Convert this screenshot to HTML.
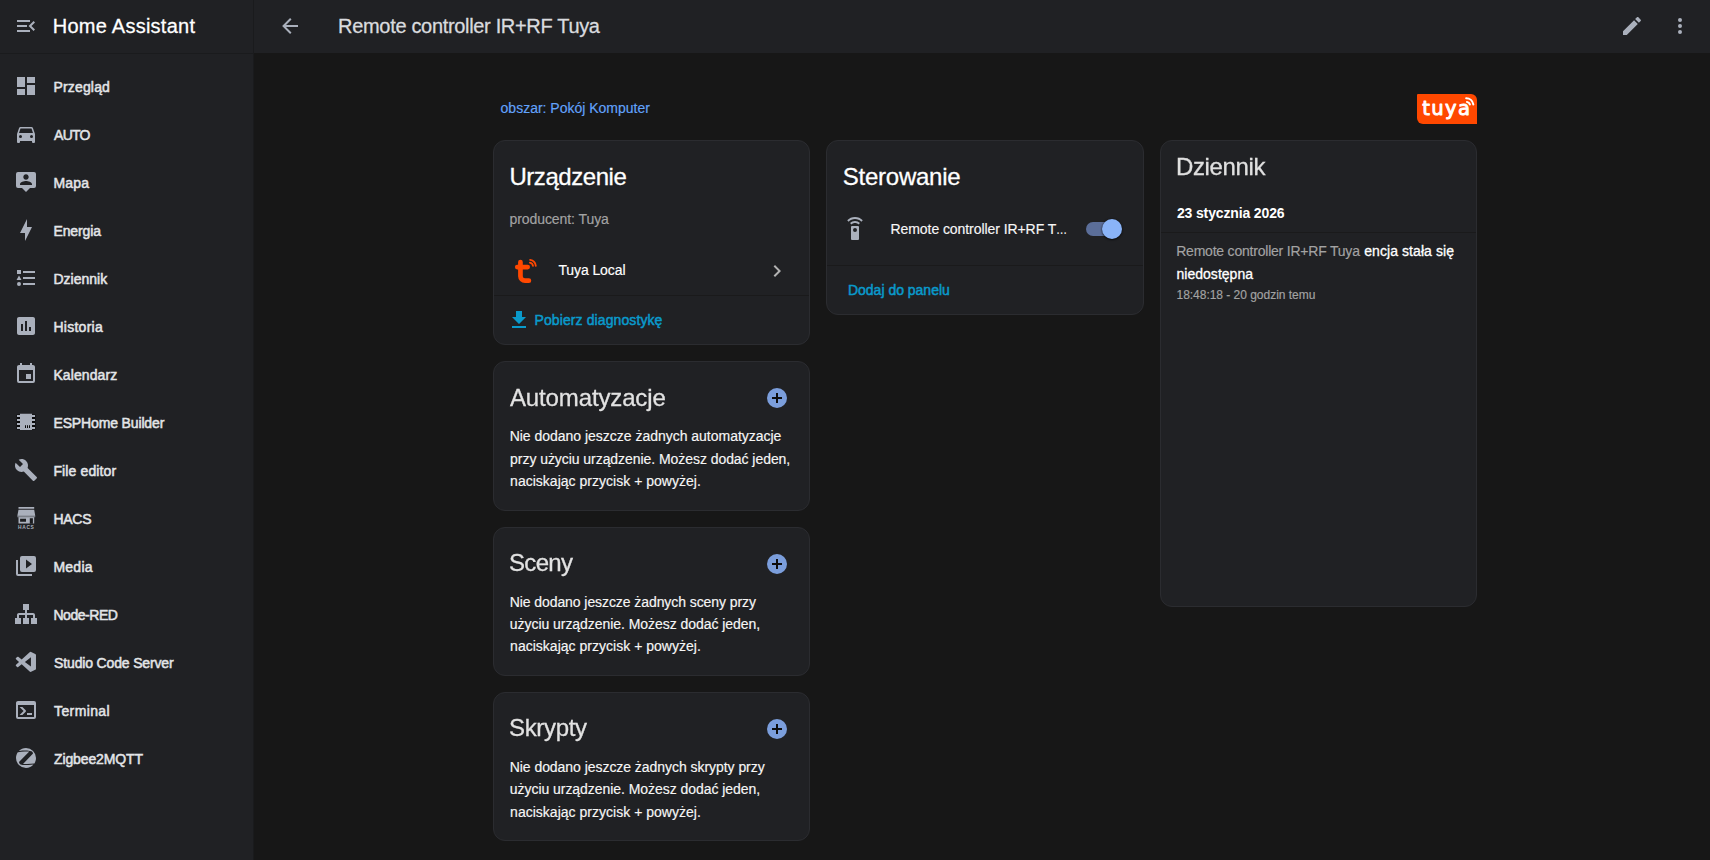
<!DOCTYPE html>
<html lang="pl"><head><meta charset="utf-8"><title>Remote controller IR+RF Tuya – Home Assistant</title>
<style>
html,body{margin:0;padding:0}
body{width:1710px;height:860px;overflow:hidden;background:#171717;position:relative;font-family:"Liberation Sans", sans-serif}
.t{position:absolute;white-space:nowrap;margin:0}
.i{position:absolute;display:block;overflow:visible}
.b{position:absolute;box-sizing:border-box}
.card{position:absolute;box-sizing:border-box;background:#202124;border:1px solid #2b2c30;border-radius:12px}
.hr{position:absolute;height:1px;background:#1a1a1b}
</style></head>
<body>
<div class="b" style="left:0;top:0;width:254px;height:860px;background:#202124;border-right:1px solid #1a1b1d"></div>
<div class="b" style="left:0;top:53px;width:253px;height:1px;background:#1a1b1d"></div>
<div class="b" style="left:254px;top:0;width:1456px;height:53px;background:#202124"></div>
<div class="card" style="left:493px;top:140px;width:317px;height:205px"></div>
<div class="card" style="left:493px;top:361px;width:317px;height:150px"></div>
<div class="card" style="left:493px;top:527px;width:317px;height:149px"></div>
<div class="card" style="left:493px;top:692px;width:317px;height:149px"></div>
<div class="card" style="left:826px;top:140px;width:318px;height:175px"></div>
<div class="card" style="left:1160px;top:140px;width:317px;height:467px"></div>
<div class="hr" style="left:494px;top:295px;width:315px"></div>
<div class="hr" style="left:827px;top:265px;width:316px"></div>
<div class="hr" style="left:1161px;top:232px;width:315px"></div>
<div class="b" style="left:1086px;top:222px;width:32px;height:14px;border-radius:7px;background:#5b6e99"></div>
<div class="b" style="left:1102px;top:219px;width:20px;height:20px;border-radius:10px;background:#8ab4f8;box-shadow:0 1px 2px rgba(0,0,0,.6),0 0 2px rgba(0,0,0,.5)"></div>
<svg class="i" style="left:1417px;top:94px" width="60" height="30" viewBox="0 0 60 30"><path d="M1,0H54A6,6 0 0,1 60,6V30H6A6,6 0 0,1 0,24V1A1,1 0 0,1 1,0Z" fill="#ff4800"/><text x="5.3" y="21.3" font-family="DejaVu Sans, sans-serif" font-size="19.6" fill="#fff" stroke="#fff" stroke-width="0.9" stroke-linejoin="round" letter-spacing="1.3">tuya</text><g fill="none" stroke="#fff" stroke-width="2.1" stroke-linecap="round"><path d="M49.2,4.3A7.2,7.2 0 0,1 56.3,10.4"/><path d="M50,8A3.6,3.6 0 0,1 52.9,10.4"/></g></svg>
<svg class="i" style="left:514px;top:257px" width="24" height="28" viewBox="0 0 24 28" fill="none" stroke="#ff4800" stroke-linecap="round"><path d="M6.45,5.1V19.2A4.5,4.5 0 0,0 10.95,23.7H14.9" stroke-width="4.7"/><path d="M3.2,10.1H13.7" stroke-width="4.6"/><path d="M16.1,2.9A6.7,6.7 0 0,1 21.8,8.9" stroke-width="1.8"/><path d="M15.9,5.7A4,4 0 0,1 19.0,8.9" stroke-width="1.8"/></svg>
<svg class="i" style="left:14.00px;top:14.00px" width="24" height="24" viewBox="0 0 24 24" fill="#aab0bc"><path d="M21,15.61L19.59,17L14.58,12L19.59,7L21,8.39L17.44,12L21,15.61M3,6H16V8H3V6M3,13V11H13V13H3M3,18V16H16V18H3Z"/></svg>
<svg class="i" style="left:14.00px;top:74.20px" width="24" height="24" viewBox="0 0 24 24" fill="#aab0bc"><path d="M13,3V9H21V3M13,21H21V11H13M3,21H11V15H3M3,13H11V3H3V13Z"/></svg>
<svg class="i" style="left:14.00px;top:122.20px" width="24" height="24" viewBox="0 0 24 24" fill="#aab0bc"><path d="M5,11L6.5,6.5H17.5L19,11M17.5,16A1.5,1.5 0 0,1 16,14.5A1.5,1.5 0 0,1 17.5,13A1.5,1.5 0 0,1 19,14.5A1.5,1.5 0 0,1 17.5,16M6.5,16A1.5,1.5 0 0,1 5,14.5A1.5,1.5 0 0,1 6.5,13A1.5,1.5 0 0,1 8,14.5A1.5,1.5 0 0,1 6.5,16M18.92,6C18.72,5.42 18.16,5 17.5,5H6.5C5.84,5 5.28,5.42 5.08,6L3,12V20A1,1 0 0,0 4,21H5A1,1 0 0,0 6,20V19H18V20A1,1 0 0,0 19,21H20A1,1 0 0,0 21,20V12L18.92,6Z"/></svg>
<svg class="i" style="left:14.00px;top:170.20px" width="24" height="24" viewBox="0 0 24 24" fill="#aab0bc"><path d="M20,2H4A2,2 0 0,0 2,4V16A2,2 0 0,0 4,18H8L12,22L16,18H20A2,2 0 0,0 22,16V4A2,2 0 0,0 20,2M12,4.3C13.5,4.3 14.7,5.5 14.7,7C14.7,8.5 13.5,9.7 12,9.7C10.5,9.7 9.3,8.5 9.3,7C9.3,5.5 10.5,4.3 12,4.3M18,15H6V14.1C6,12.1 10,11 12,11C14,11 18,12.1 18,14.1V15Z"/></svg>
<svg class="i" style="left:14.00px;top:218.20px" width="24" height="24" viewBox="0 0 24 24" fill="#aab0bc"><path d="M11,15H6L13,1V9H18L11,23V15Z"/></svg>
<svg class="i" style="left:14.00px;top:266.20px" width="24" height="24" viewBox="0 0 24 24" fill="#aab0bc"><path d="M5,9.5L7.5,14H2.5L5,9.5M3,4H7V8H3V4M5,20A2,2 0 0,0 7,18A2,2 0 0,0 5,16A2,2 0 0,0 3,18A2,2 0 0,0 5,20M9,5V7H21V5H9M9,19H21V17H9V19M9,13H21V11H9V13Z"/></svg>
<svg class="i" style="left:14.00px;top:314.20px" width="24" height="24" viewBox="0 0 24 24" fill="#aab0bc"><path d="M19,3H5C3.9,3 3,3.9 3,5V19C3,20.1 3.9,21 5,21H19C20.1,21 21,20.1 21,19V5C21,3.9 20.1,3 19,3M9,17H7V10H9V17M13,17H11V7H13V17M17,17H15V13H17V17Z"/></svg>
<svg class="i" style="left:14.00px;top:362.20px" width="24" height="24" viewBox="0 0 24 24" fill="#aab0bc"><path d="M19,19H5V8H19M16,1V3H8V1H6V3H5C3.89,3 3,3.89 3,5V19A2,2 0 0,0 5,21H19A2,2 0 0,0 21,19V5C21,3.89 20.1,3 19,3H18V1M17,12H12V17H17V12Z"/></svg>
<svg class="i" style="left:14.00px;top:410.20px" width="24" height="24" viewBox="0 0 24 24" fill="#aab0bc"><path d="M2.6,4.6H6.4V19.4H2.6Z M17.6,4.6H21.4V19.4H17.6Z" fill="#0a0a0b"/><path d="M6,3.8H18V20H6Z M3,5H6V7H3Z M3,9H6V11H3Z M3,13H6V15H3Z M3,17H6V19H3Z M18,5H21V7H18Z M18,9H21V11H18Z M18,13H21V15H18Z M18,17H21V19H18Z"/><path d="M11,15.2H12V18H11Z M13,15.2H14V18H13Z M15,15.2H16V18H15Z" fill="#0a0a0b"/></svg>
<svg class="i" style="left:14.00px;top:458.20px" width="24" height="24" viewBox="0 0 24 24" fill="#aab0bc"><path d="M22.7,19L13.6,9.9C14.5,7.6 14,4.9 12.1,3C10.1,1 7.1,0.6 4.7,1.7L9,6L6,9L1.6,4.7C0.4,7.1 0.9,10.1 2.9,12.1C4.8,14 7.5,14.5 9.8,13.6L18.9,22.7C19.3,23.1 19.9,23.1 20.3,22.7L22.6,20.4C23.1,20 23.1,19.3 22.7,19Z"/></svg>
<svg class="i" style="left:14.00px;top:506.20px" width="24" height="24" viewBox="0 0 24 24" fill="#aab0bc"><path d="M4.5,0.9H20.2V2.8H4.5Z M4.5,3.8H20.2L21.2,9.6V11.3H20.2V17.6H4.5V11.3H3.4V9.6Z"/><path d="M3.4,9.6H21.2V11.3H3.4Z" fill="#000" fill-opacity=".28"/><path d="M6.1,12.8H12V15.8H6.1Z M15.8,12.2H18.9V17.7H15.8Z" fill="#1b1c1f"/><text x="4.1" y="23.1" font-family="Liberation Sans, sans-serif" font-weight="700" font-size="4.9" letter-spacing="0.62">HACS</text></svg>
<svg class="i" style="left:14.00px;top:554.20px" width="24" height="24" viewBox="0 0 24 24" fill="#aab0bc"><path d="M4,6H2V20A2,2 0 0,0 4,22H18V20H4V6M20,2H8A2,2 0 0,0 6,4V16A2,2 0 0,0 8,18H20A2,2 0 0,0 22,16V4A2,2 0 0,0 20,2M12,14.5V5.5L18,10L12,14.5Z"/></svg>
<svg class="i" style="left:14.00px;top:602.20px" width="24" height="24" viewBox="0 0 24 24" fill="#aab0bc"><path d="M9,2V8H11V11H5C3.89,11 3,11.89 3,13V16H1V22H7V16H5V13H11V16H9V22H15V16H13V13H19V16H17V22H23V16H21V13C21,11.89 20.11,11 19,11H13V8H15V2H9Z"/></svg>
<svg class="i" style="left:14.00px;top:650.20px" width="24" height="24" viewBox="0 0 24 24" fill="#aab0bc"><path transform="translate(1.75,1.8) scale(0.843)" d="M23.15 2.587L18.21.21a1.494 1.494 0 0 0-1.705.29l-9.46 8.63-4.12-3.128a.999.999 0 0 0-1.276.057L.327 7.261A1 1 0 0 0 .326 8.74L3.899 12 .326 15.26a1 1 0 0 0 .001 1.479L1.65 17.94a.999.999 0 0 0 1.276.057l4.12-3.128 9.46 8.63a1.492 1.492 0 0 0 1.704.29l4.942-2.377A1.5 1.5 0 0 0 24 20.06V3.939a1.5 1.5 0 0 0-.85-1.352zm-5.146 14.861L10.826 12l7.178-5.448v10.896z"/></svg>
<svg class="i" style="left:14.00px;top:698.20px" width="24" height="24" viewBox="0 0 24 24" fill="#aab0bc"><path d="M20,19V7H4V19H20M20,3A2,2 0 0,1 22,5V19A2,2 0 0,1 20,21H4A2,2 0 0,1 2,19V5C2,3.89 2.9,3 4,3H20M13,17V15H18V17H13M9.58,13L5.57,9H8.4L11.7,12.3C12.09,12.69 12.09,13.33 11.7,13.72L8.42,17H5.59L9.58,13Z"/></svg>
<svg class="i" style="left:14.00px;top:746.20px" width="24" height="24" viewBox="0 0 24 24" fill="#aab0bc"><path d="M4.06,6.15C3.97,6.17 3.88,6.22 3.8,6.28C2.66,7.9 2,9.87 2,12A10,10 0 0,0 12,22C15,22 17.68,20.68 19.5,18.6L17,18.85C14.25,19.15 11.45,19.19 8.66,18.96C7.95,18.94 7.24,18.76 6.59,18.45C5.73,18.06 5.15,17.23 5.07,16.29C5.06,16.13 5.12,16 5.23,15.87L7.42,13.6L15.03,5.7V5.6H10.84C8.57,5.64 6.31,5.82 4.06,6.15M20.17,17.5C20.26,17.47 20.35,17.44 20.43,17.39C21.42,15.83 22,14 22,12A10,10 0 0,0 12,2C9.22,2 6.7,3.13 4.89,4.97H5.17C8.28,4.57 11.43,4.47 14.56,4.65C15.5,4.64 16.45,4.82 17.33,5.17C18.25,5.53 18.89,6.38 19,7.37C19,7.53 18.93,7.7 18.82,7.82L9.71,17.19L9,17.95V18.06H13.14C15.5,18 17.84,17.81 20.17,17.5Z"/></svg>
<svg class="i" style="left:278.00px;top:14.00px" width="24" height="24" viewBox="0 0 24 24" fill="#aab0bc"><path d="M20,11V13H8L13.5,18.5L12.08,19.92L4.16,12L12.08,4.08L13.5,5.5L8,11H20Z"/></svg>
<svg class="i" style="left:1619.60px;top:13.80px" width="24" height="24" viewBox="0 0 24 24" fill="#aab0bc"><path d="M20.71,7.04C21.1,6.65 21.1,6 20.71,5.63L18.37,3.29C18,2.9 17.35,2.9 16.96,3.29L15.12,5.12L18.87,8.87M3,17.25V21H6.75L17.81,9.93L14.06,6.18L3,17.25Z"/></svg>
<svg class="i" style="left:1668.00px;top:14.00px" width="24" height="24" viewBox="0 0 24 24" fill="#aab0bc"><path d="M12,16A2,2 0 0,1 14,18A2,2 0 0,1 12,20A2,2 0 0,1 10,18A2,2 0 0,1 12,16M12,10A2,2 0 0,1 14,12A2,2 0 0,1 12,14A2,2 0 0,1 10,12A2,2 0 0,1 12,10M12,4A2,2 0 0,1 14,6A2,2 0 0,1 12,8A2,2 0 0,1 10,6A2,2 0 0,1 12,4Z"/></svg>
<svg class="i" style="left:765.10px;top:259.00px" width="24" height="24" viewBox="0 0 24 24" fill="#b2b2b2"><path d="M8.59,16.58L13.17,12L8.59,7.41L10,6L16,12L10,18L8.59,16.58Z"/></svg>
<svg class="i" style="left:507.00px;top:308.00px" width="24" height="24" viewBox="0 0 24 24" fill="#0a9acb"><path d="M5,20H19V18H5M19,9H15V3H9V9H5L12,16L19,9Z"/></svg>
<svg class="i" style="left:843.00px;top:216.80px" width="24" height="24" viewBox="0 0 24 24" fill="#aab0bc"><path d="M12,0C8.96,0 6.21,1.23 4.22,3.22L5.63,4.63C7.26,3 9.5,2 12,2C14.5,2 16.74,3 18.36,4.64L19.77,3.23C17.79,1.23 15.04,0 12,0M7.05,6.05L8.46,7.46C9.37,6.56 10.62,6 12,6C13.38,6 14.63,6.56 15.54,7.46L16.95,6.05C15.68,4.78 13.93,4 12,4C10.07,4 8.32,4.78 7.05,6.05M12,15A2,2 0 0,1 10,13A2,2 0 0,1 12,11A2,2 0 0,1 14,13A2,2 0 0,1 12,15M15,9H9A1,1 0 0,0 8,10V22A1,1 0 0,0 9,23H15A1,1 0 0,0 16,22V10A1,1 0 0,0 15,9Z"/></svg>
<svg class="i" style="left:765.00px;top:386.00px" width="24" height="24" viewBox="0 0 24 24" fill="#7b9edc"><circle cx="12" cy="12" r="10"/><path d="M17,13H13V17H11V13H7V11H11V7H13V11H17Z" fill="#0d0d0e"/></svg>
<svg class="i" style="left:765.00px;top:552.00px" width="24" height="24" viewBox="0 0 24 24" fill="#7b9edc"><circle cx="12" cy="12" r="10"/><path d="M17,13H13V17H11V13H7V11H11V7H13V11H17Z" fill="#0d0d0e"/></svg>
<svg class="i" style="left:765.00px;top:717.00px" width="24" height="24" viewBox="0 0 24 24" fill="#7b9edc"><circle cx="12" cy="12" r="10"/><path d="M17,13H13V17H11V13H7V11H11V7H13V11H17Z" fill="#0d0d0e"/></svg>
<div class="t" id="ha" style="left:52.80px;top:12.07px;font-size:20px;line-height:28px;color:#ffffff;letter-spacing:0.247px;-webkit-text-stroke:.28px;">Home Assistant</div>
<div class="t" id="s0" style="left:53.46px;top:77.15px;font-size:14px;line-height:20px;color:#e3e5e8;letter-spacing:0.167px;-webkit-text-stroke:.5px;">Przegląd</div>
<div class="t" id="s1" style="left:54.10px;top:125.15px;font-size:14px;line-height:20px;color:#e3e5e8;letter-spacing:-0.782px;-webkit-text-stroke:.5px;">AUTO</div>
<div class="t" id="s2" style="left:53.46px;top:173.15px;font-size:14px;line-height:20px;color:#e3e5e8;letter-spacing:0.148px;-webkit-text-stroke:.5px;">Mapa</div>
<div class="t" id="s3" style="left:53.46px;top:221.15px;font-size:14px;line-height:20px;color:#e3e5e8;letter-spacing:-0.102px;-webkit-text-stroke:.5px;">Energia</div>
<div class="t" id="s4" style="left:53.46px;top:269.15px;font-size:14px;line-height:20px;color:#e3e5e8;letter-spacing:0.002px;-webkit-text-stroke:.5px;">Dziennik</div>
<div class="t" id="s5" style="left:53.46px;top:317.15px;font-size:14px;line-height:20px;color:#e3e5e8;letter-spacing:0.261px;-webkit-text-stroke:.5px;">Historia</div>
<div class="t" id="s6" style="left:53.46px;top:365.15px;font-size:14px;line-height:20px;color:#e3e5e8;letter-spacing:0.082px;-webkit-text-stroke:.5px;">Kalendarz</div>
<div class="t" id="s7" style="left:53.46px;top:413.15px;font-size:14px;line-height:20px;color:#e3e5e8;letter-spacing:-0.140px;-webkit-text-stroke:.5px;">ESPHome Builder</div>
<div class="t" id="s8" style="left:53.46px;top:461.15px;font-size:14px;line-height:20px;color:#e3e5e8;letter-spacing:0.119px;-webkit-text-stroke:.5px;">File editor</div>
<div class="t" id="s9" style="left:53.46px;top:509.15px;font-size:14px;line-height:20px;color:#e3e5e8;letter-spacing:-0.264px;-webkit-text-stroke:.5px;">HACS</div>
<div class="t" id="s10" style="left:53.46px;top:557.15px;font-size:14px;line-height:20px;color:#e3e5e8;letter-spacing:0.230px;-webkit-text-stroke:.5px;">Media</div>
<div class="t" id="s11" style="left:53.46px;top:605.15px;font-size:14px;line-height:20px;color:#e3e5e8;letter-spacing:-0.454px;-webkit-text-stroke:.5px;">Node-RED</div>
<div class="t" id="s12" style="left:54.10px;top:653.15px;font-size:14px;line-height:20px;color:#e3e5e8;letter-spacing:-0.154px;-webkit-text-stroke:.5px;">Studio Code Server</div>
<div class="t" id="s13" style="left:54.10px;top:701.15px;font-size:14px;line-height:20px;color:#e3e5e8;letter-spacing:0.372px;-webkit-text-stroke:.5px;">Terminal</div>
<div class="t" id="s14" style="left:54.10px;top:749.15px;font-size:14px;line-height:20px;color:#e3e5e8;letter-spacing:-0.140px;-webkit-text-stroke:.5px;">Zigbee2MQTT</div>
<div class="t" id="title" style="left:338.10px;top:12.07px;font-size:20px;line-height:28px;color:#d9dbdf;letter-spacing:-0.325px;-webkit-text-stroke:.28px;">Remote controller IR+RF Tuya</div>
<div class="t" id="area" style="left:500.58px;top:98.15px;font-size:14px;line-height:20px;color:#62a3fb;letter-spacing:-0.005px;-webkit-text-stroke:.16px;">obszar: Pokój Komputer</div>
<div class="t" id="c1h" style="left:509.41px;top:159.68px;font-size:24px;line-height:34px;color:#ffffff;letter-spacing:-0.442px;-webkit-text-stroke:.28px;">Urządzenie</div>
<div class="t" id="c1p" style="left:509.49px;top:209.15px;font-size:14px;line-height:20px;color:#a3a3a3;letter-spacing:-0.073px;-webkit-text-stroke:.16px;">producent: Tuya</div>
<div class="t" id="c1t" style="left:558.40px;top:260.15px;font-size:14px;line-height:20px;color:#ffffff;letter-spacing:-0.093px;-webkit-text-stroke:.16px;">Tuya Local</div>
<div class="t" id="c1d" style="left:534.53px;top:310.15px;font-size:14px;line-height:20px;color:#0a9acb;letter-spacing:0.101px;-webkit-text-stroke:.5px;">Pobierz diagnostykę</div>
<div class="t" id="c2h" style="left:842.70px;top:159.68px;font-size:24px;line-height:34px;color:#ffffff;letter-spacing:-0.230px;-webkit-text-stroke:.28px;">Sterowanie</div>
<div class="t" id="c2e" style="left:890.50px;top:219.15px;font-size:14px;line-height:20px;color:#f6f6f6;letter-spacing:-0.069px;-webkit-text-stroke:.16px;">Remote controller IR+RF T</div>
<div class="t" id="c2e2" style="left:1056.20px;top:219.15px;font-size:14px;line-height:20px;color:#f6f6f6;letter-spacing:0.000px;-webkit-text-stroke:.16px;transform:scaleX(.8);transform-origin:0 0;">…</div>
<div class="t" id="c2a" style="left:847.97px;top:280.15px;font-size:14px;line-height:20px;color:#0a9acb;letter-spacing:-0.009px;-webkit-text-stroke:.5px;">Dodaj do panelu</div>
<div class="t" id="c3h" style="left:1175.84px;top:149.68px;font-size:24px;line-height:34px;color:#e0e0e0;letter-spacing:-0.367px;-webkit-text-stroke:.28px;will-change:transform;">Dziennik</div>
<div class="t" id="c3d" style="left:1176.90px;top:203.15px;font-size:14px;line-height:20px;color:#ffffff;letter-spacing:-0.135px;font-weight:700;">23 stycznia 2026</div>
<div class="t" id="c3l1" style="left:1176.20px;top:241.15px;font-size:14px;line-height:20px;color:#a3a3a3;letter-spacing:-0.212px;-webkit-text-stroke:.16px;">Remote controller IR+RF Tuya</div>
<div class="t" id="c3l1b" style="left:1364.28px;top:241.15px;font-size:14px;line-height:20px;color:#ffffff;letter-spacing:0.068px;-webkit-text-stroke:.3px;">encja stała się</div>
<div class="t" id="c3l2" style="left:1176.53px;top:264.15px;font-size:14px;line-height:20px;color:#ffffff;letter-spacing:0.018px;-webkit-text-stroke:.3px;">niedostępna</div>
<div class="t" id="c3l3" style="left:1176.49px;top:286.64px;font-size:12px;line-height:17px;color:#a3a3a3;letter-spacing:-0.024px;-webkit-text-stroke:.16px;">18:48:18 - 20 godzin temu</div>
<div class="t" id="k0h" style="left:510.35px;top:380.68px;font-size:24px;line-height:34px;color:#e2e2e2;letter-spacing:-0.138px;-webkit-text-stroke:.28px;will-change:transform;">Automatyzacje</div>
<div class="t" id="k0l0" style="left:509.70px;top:426.15px;font-size:14px;line-height:20px;color:#f6f6f6;letter-spacing:-0.018px;-webkit-text-stroke:.16px;">Nie dodano jeszcze żadnych automatyzacje</div>
<div class="t" id="k0l1" style="left:510.11px;top:449.15px;font-size:14px;line-height:20px;color:#f6f6f6;letter-spacing:-0.056px;-webkit-text-stroke:.16px;">przy użyciu urządzenie. Możesz dodać jeden,</div>
<div class="t" id="k0l2" style="left:510.09px;top:471.15px;font-size:14px;line-height:20px;color:#f6f6f6;letter-spacing:0.018px;-webkit-text-stroke:.16px;">naciskając przycisk + powyżej.</div>
<div class="t" id="k1h" style="left:509.40px;top:545.68px;font-size:24px;line-height:34px;color:#e2e2e2;letter-spacing:-0.676px;-webkit-text-stroke:.28px;will-change:transform;">Sceny</div>
<div class="t" id="k1l0" style="left:509.70px;top:592.15px;font-size:14px;line-height:20px;color:#f6f6f6;letter-spacing:-0.076px;-webkit-text-stroke:.16px;">Nie dodano jeszcze żadnych sceny przy</div>
<div class="t" id="k1l1" style="left:509.84px;top:614.15px;font-size:14px;line-height:20px;color:#f6f6f6;letter-spacing:-0.049px;-webkit-text-stroke:.16px;">użyciu urządzenie. Możesz dodać jeden,</div>
<div class="t" id="k1l2" style="left:510.09px;top:636.15px;font-size:14px;line-height:20px;color:#f6f6f6;letter-spacing:0.018px;-webkit-text-stroke:.16px;">naciskając przycisk + powyżej.</div>
<div class="t" id="k2h" style="left:509.40px;top:710.68px;font-size:24px;line-height:34px;color:#e2e2e2;letter-spacing:-0.336px;-webkit-text-stroke:.28px;will-change:transform;">Skrypty</div>
<div class="t" id="k2l0" style="left:509.70px;top:757.15px;font-size:14px;line-height:20px;color:#f6f6f6;letter-spacing:-0.047px;-webkit-text-stroke:.16px;">Nie dodano jeszcze żadnych skrypty przy</div>
<div class="t" id="k2l1" style="left:509.84px;top:779.15px;font-size:14px;line-height:20px;color:#f6f6f6;letter-spacing:-0.049px;-webkit-text-stroke:.16px;">użyciu urządzenie. Możesz dodać jeden,</div>
<div class="t" id="k2l2" style="left:510.09px;top:802.15px;font-size:14px;line-height:20px;color:#f6f6f6;letter-spacing:0.018px;-webkit-text-stroke:.16px;">naciskając przycisk + powyżej.</div>
</body></html>
